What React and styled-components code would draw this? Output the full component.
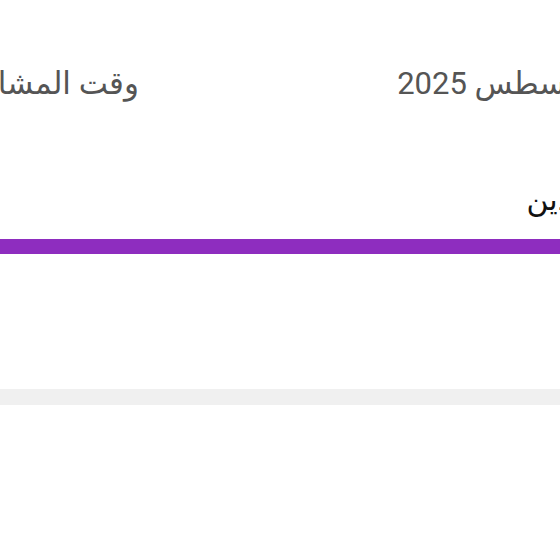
import styled, { createGlobalStyle } from "styled-components";

const GlobalStyle = createGlobalStyle`
  html, body {
    margin: 0;
    padding: 0;
    background: #ffffff;
    overflow: hidden;
  }
`;

const Screen = styled.div`
  direction: rtl;
  width: 700px;
  margin-left: -80px;
  font-family: Roboto, "Noto Sans", "DejaVu Sans", sans-serif;
  background: #ffffff;
  height: 560px;
`;

const StatsRow = styled.div`
  display: flex;
  justify-content: space-between;
  align-items: center;
  padding: 60px 0 0 0;
  height: 48px;
`;

const StatText = styled.span`
  font-size: 31px;
  line-height: 48px;
  color: #555555;
  white-space: nowrap;
  margin-right: ${(p) => p.$inset || 0}px;
  margin-left: ${(p) => p.$outset || 0}px;
`;

const Tabs = styled.div`
  display: flex;
  margin-top: 68px;
`;

const Tab = styled.div`
  flex: 1;
  display: flex;
  flex-direction: column;
  align-items: flex-start;
`;

const TabLabel = styled.span`
  font-size: 30px;
  line-height: 48px;
  color: #111111;
  padding: 0 0 15px 0;
  margin-right: ${(p) => p.$inset || 0}px;
  white-space: nowrap;
`;

const Indicator = styled.div`
  align-self: stretch;
  height: 15px;
  background: #8e2dbf;
`;

const Content = styled.div`
  height: 135px;
`;

const Divider = styled.div`
  height: 16px;
  background: #f0f0f0;
`;

export default function App() {
  return (
    <>
      <GlobalStyle />
      <Screen>
        <StatsRow>
          <StatText $inset={28}>أغسطس 2025</StatText>
          <StatText $outset={29}>وقت المشاهدة</StatText>
        </StatsRow>
        <Tabs>
          <Tab>
            <TabLabel $inset={-40}>المشاهدين</TabLabel>
            <Indicator />
          </Tab>
        </Tabs>
        <Content />
        <Divider />
      </Screen>
    </>
  );
}
